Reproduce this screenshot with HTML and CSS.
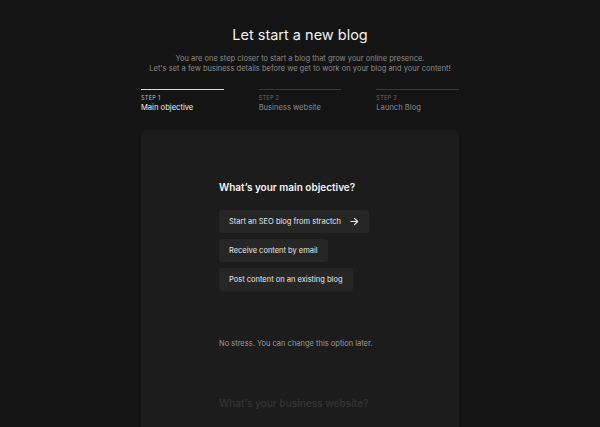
FILE: index.html
```html
<!DOCTYPE html>
<html lang="en">
<head>
    <meta charset="UTF-8">
    <title>Let start a new blog</title>
    <link rel="stylesheet" href="styles.css">
</head>
<body>
    <div class="page">
        <h1 class="title">Let start a new blog</h1>
        <p class="intro">You are one step closer to start a blog that grow your online presence.<br>Let's set a few business details before we get to work on your blog and your content!</p>

        <div class="steps">
            <div class="step active">
                <span class="step-num">STEP 1</span>
                <span class="step-name">Main objective</span>
            </div>
            <div class="step">
                <span class="step-num">STEP 2</span>
                <span class="step-name">Business website</span>
            </div>
            <div class="step">
                <span class="step-num">STEP 3</span>
                <span class="step-name">Launch Blog</span>
            </div>
        </div>

        <div class="card">
            <div class="question">
                <h2>What’s your main objective?</h2>
                <div class="options">
                    <button class="option">Start an SEO blog from stractch
                        <svg width="9" height="9" viewBox="0 0 10 10"><path d="M1 5h7.5M5 1.5L8.5 5 5 8.5" fill="none" stroke="#e8e8e8" stroke-width="1.3" stroke-linecap="round" stroke-linejoin="round"/></svg>
                    </button>
                    <button class="option">Receive content by email</button>
                    <button class="option">Post content on an existing blog</button>
                </div>
                <p class="note">No stress. You can change this option later.</p>
            </div>
            <div class="question next">
                <h2>What’s your business website?</h2>
            </div>
        </div>
    </div>
</body>
</html>
```

FILE: styles.css
```css
body {
    margin: 0;
    background-color: #141414;
    font-family: Inter, "Liberation Sans", sans-serif;
    color: #f2f2f2;
}
.page {
    width: 318px;
    margin: 0 auto;
    padding-top: 25px;
}
.title {
    margin: 0;
    font-size: 14.5px;
    font-weight: 400;
    text-align: center;
    line-height: 20px;
}
.intro {
    margin: 9px -40px 0;
    font-size: 7.5px;
    line-height: 10px;
    color: #8a8a8a;
    text-align: center;
    white-space: nowrap;
}
.steps {
    display: grid;
    grid-template-columns: repeat(3, 1fr);
    gap: 35px;
    margin-top: 15px;
}
.step {
    display: flex;
    flex-direction: column;
    border-top: 1.5px solid #3a3a3a;
    padding-top: 5px;
}
.step-num {
    font-size: 5.5px;
    letter-spacing: 0.3px;
    color: #6a6a6a;
    line-height: 7px;
}
.step-name {
    font-size: 7.6px;
    line-height: 11px;
    color: #8a8a8a;
}
.step.active {
    border-top-color: #d8d8d8;
}
.step.active .step-num {
    color: #bdbdbd;
}
.step.active .step-name {
    color: #f0f0f0;
}
.card {
    margin-top: 17px;
    height: 320px;
    background-color: #1c1c1c;
    border-radius: 6px;
    padding: 50px 0 0 78px;
}
.question h2 {
    margin: 0;
    font-size: 10px;
    font-weight: 600;
    line-height: 14px;
    color: #f5f5f5;
}
.options {
    display: flex;
    flex-direction: column;
    align-items: flex-start;
    gap: 6px;
    margin-top: 16px;
}
.option {
    display: flex;
    align-items: center;
    gap: 9px;
    height: 23px;
    padding: 0 10px;
    border: none;
    border-radius: 3px;
    background-color: #262626;
    color: #e6e6e6;
    font-family: inherit;
    font-size: 7.5px;
    cursor: pointer;
}
.option:hover {
    background-color: #2e2e2e;
}
.note {
    margin: 48px 0 0;
    font-size: 7.5px;
    color: #9a9a9a;
}
.next {
    margin-top: 48px;
}
.next h2 {
    color: #323232;
}
```
